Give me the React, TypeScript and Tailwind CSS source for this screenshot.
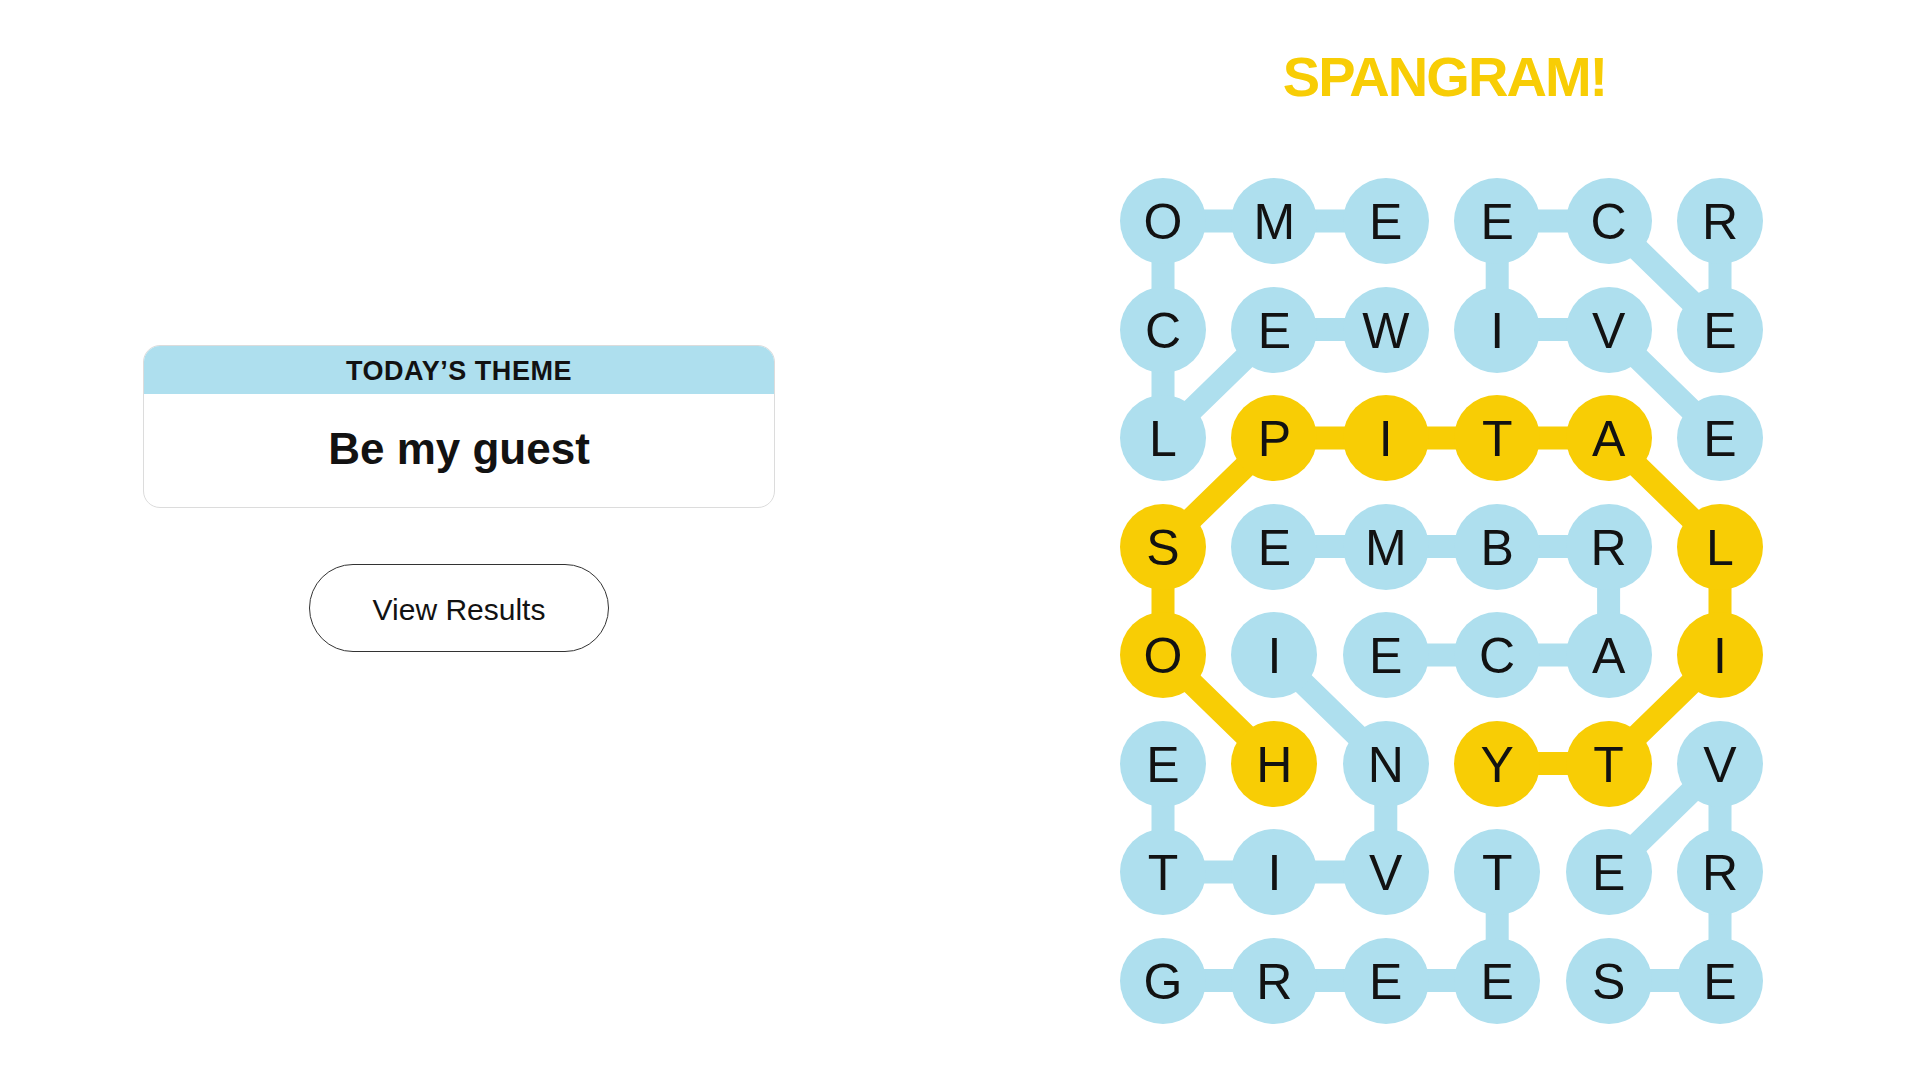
import React from "react";

const GRID: string[] = [
  "OMEECR",
  "CEWIVE",
  "LPITAE",
  "SEMBRL",
  "OIECAI",
  "EHNYTV",
  "TIVTER",
  "GREESE",
];

type P = [number, number];

const SPAN: P[] = [
  [5, 1], [4, 0], [3, 0], [2, 1], [2, 2], [2, 3], [2, 4], [3, 5], [4, 5], [5, 4], [5, 3],
];

const WORDS: P[][] = [
  [[1, 2], [1, 1], [2, 0], [1, 0], [0, 0], [0, 1], [0, 2]],
  [[0, 5], [1, 5], [0, 4], [0, 3], [1, 3], [1, 4], [2, 5]],
  [[3, 1], [3, 2], [3, 3], [3, 4], [4, 4], [4, 3], [4, 2]],
  [[4, 1], [5, 2], [6, 2], [6, 1], [6, 0], [5, 0]],
  [[7, 0], [7, 1], [7, 2], [7, 3], [6, 3]],
  [[7, 4], [7, 5], [6, 5], [5, 5], [6, 4]],
];

const D = 86;
const CX = 111.4;
const RY = 108.5;
const W = 5 * CX + D;
const H = 7 * RY + D;

const cx = (c: number) => D / 2 + c * CX;
const cy = (r: number) => D / 2 + r * RY;

function Path({ pts, color }: { pts: P[]; color: string }) {
  const d = pts.map((p, i) => `${i === 0 ? "M" : "L"}${cx(p[1])} ${cy(p[0])}`).join(" ");
  return <path d={d} stroke={color} strokeWidth={23} fill="none" strokeLinejoin="round" />;
}

const isSpan = (r: number, c: number) => SPAN.some(([a, b]) => a === r && b === c);

export default function App() {
  return (
    <div
      className="flex w-full h-[1080px] bg-white overflow-hidden"
      style={{ fontFamily: '"Liberation Sans", Arial, sans-serif' }}
    >
      <div className="ml-[143px] w-[632px] flex flex-col items-center pt-[345px] shrink-0">
        <div className="w-[632px] h-[163px] rounded-[17px] border border-[#dcdcdc] overflow-hidden flex flex-col bg-white">
          <div className="h-[49px] bg-[#aedfee] flex items-center justify-center pt-[3px] -mx-px -mt-px">
            <span className="text-[27px] font-bold tracking-[0.02em] text-[#121212] leading-none">
              TODAY’S THEME
            </span>
          </div>
          <div className="flex-1 flex items-center justify-center pb-[4px]">
            <span className="text-[44px] font-bold text-[#121212] leading-none">Be my guest</span>
          </div>
        </div>
        <button className="mt-[56px] w-[300px] h-[88px] rounded-full border-[1.5px] border-[#333333] bg-white flex items-center justify-center">
          <span className="text-[30px] text-[#121212] leading-none pt-[3px]">View Results</span>
        </button>
      </div>

      <div className="ml-[345px] w-[643px] flex flex-col items-center pt-[49px] shrink-0">
        <div className="h-[56px] text-[56px] leading-[56px] font-bold text-[#f8cd05] tracking-[-0.035em] pl-[6px]">
          SPANGRAM!
        </div>
        <div className="relative mt-[73px]" style={{ width: W, height: H }}>
          <svg className="absolute inset-0" width={W} height={H} viewBox={`0 0 ${W} ${H}`}>
            {WORDS.map((w, i) => (
              <Path key={i} pts={w} color="#aedfee" />
            ))}
            <Path pts={SPAN} color="#f8cd05" />
          </svg>
          <div className="relative grid grid-cols-[repeat(6,86px)] grid-rows-[repeat(8,86px)] gap-x-[25.4px] gap-y-[22.5px]">
            {GRID.map((row, r) =>
              row.split("").map((ch, c) => (
                <div
                  key={`${r}-${c}`}
                  className={`w-[86px] h-[86px] rounded-full flex items-center justify-center ${
                    isSpan(r, c) ? "bg-[#f8cd05]" : "bg-[#aedfee]"
                  }`}
                >
                  <span className="text-[50px] leading-none text-[#121212] pt-[2px]">{ch}</span>
                </div>
              ))
            )}
          </div>
        </div>
      </div>
    </div>
  );
}
